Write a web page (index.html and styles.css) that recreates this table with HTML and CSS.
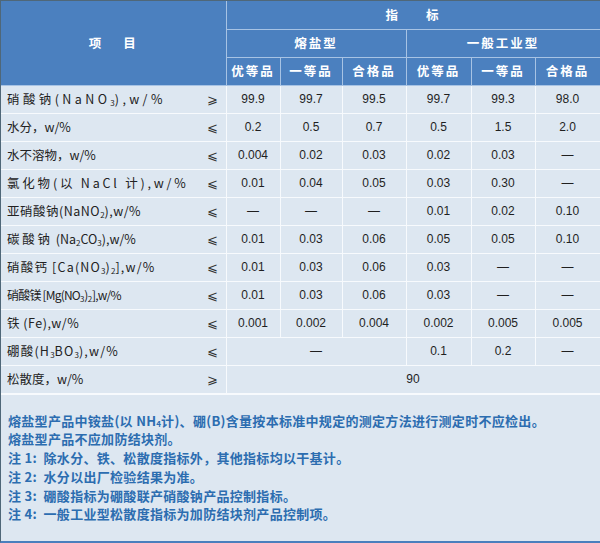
FILE: index.html
```html
<!DOCTYPE html>
<html lang="zh-CN">
<head>
<meta charset="utf-8">
<title>工业硝酸钠指标</title>
<link rel="stylesheet" href="styles.css">
</head>
<body>
<div class="sheet">
  <table class="spec">
    <colgroup>
      <col class="c-label"><col class="c-sym">
      <col class="c-a"><col class="c-b"><col class="c-c">
      <col class="c-d"><col class="c-e"><col class="c-f">
    </colgroup>
    <thead>
      <tr class="hr1">
        <th colspan="2" rowspan="3" class="item">项<span class="gap"></span>目</th>
        <th colspan="6" class="wide">指<span class="gap2"></span>标</th>
      </tr>
      <tr class="hr2">
        <th colspan="3">熔盐型</th>
        <th colspan="3">一般工业型</th>
      </tr>
      <tr class="hr3">
        <th>优等品</th><th>一等品</th><th>合格品</th>
        <th>优等品</th><th>一等品</th><th>合格品</th>
      </tr>
    </thead>
    <tbody>
      <tr>
        <td class="lbl sp4">硝酸钠(NaNO<sub>3</sub>),w/%</td><td class="sym">⩾</td>
        <td>99.9</td><td>99.7</td><td>99.5</td><td>99.7</td><td>99.3</td><td>98.0</td>
      </tr>
      <tr>
        <td class="lbl">水分，w/%</td><td class="sym">⩽</td>
        <td>0.2</td><td>0.5</td><td>0.7</td><td>0.5</td><td>1.5</td><td>2.0</td>
      </tr>
      <tr>
        <td class="lbl">水不溶物，w/%</td><td class="sym">⩽</td>
        <td>0.004</td><td>0.02</td><td>0.03</td><td>0.02</td><td>0.03</td><td>—</td>
      </tr>
      <tr>
        <td class="lbl sp3">氯化物(以 NaCl 计),w/%</td><td class="sym">⩽</td>
        <td>0.01</td><td>0.04</td><td>0.05</td><td>0.03</td><td>0.30</td><td>—</td>
      </tr>
      <tr>
        <td class="lbl sp1">亚硝酸钠(NaNO<sub>2</sub>),w/%</td><td class="sym">⩽</td>
        <td>—</td><td>—</td><td>—</td><td>0.01</td><td>0.02</td><td>0.10</td>
      </tr>
      <tr>
        <td class="lbl"><span class="sp3">碳酸钠</span> (Na<sub>2</sub>CO<sub>3</sub>),w/%</td><td class="sym">⩽</td>
        <td>0.01</td><td>0.03</td><td>0.06</td><td>0.05</td><td>0.05</td><td>0.10</td>
      </tr>
      <tr>
        <td class="lbl sp2">硝酸钙 [Ca(NO<sub>3</sub>)<sub>2</sub>],w/%</td><td class="sym">⩽</td>
        <td>0.01</td><td>0.03</td><td>0.06</td><td>0.03</td><td>—</td><td>—</td>
      </tr>
      <tr>
        <td class="lbl tight">硝酸镁 [Mg(NO<sub>3</sub>)<sub>2</sub>],w/%</td><td class="sym">⩽</td>
        <td>0.01</td><td>0.03</td><td>0.06</td><td>0.03</td><td>—</td><td>—</td>
      </tr>
      <tr>
        <td class="lbl sp1">铁 (Fe),w/%</td><td class="sym">⩽</td>
        <td>0.001</td><td>0.002</td><td>0.004</td><td>0.002</td><td>0.005</td><td>0.005</td>
      </tr>
      <tr>
        <td class="lbl sp2">硼酸(H<sub>3</sub>BO<sub>3</sub>),w/%</td><td class="sym">⩽</td>
        <td colspan="3">—</td><td>0.1</td><td>0.2</td><td>—</td>
      </tr>
      <tr>
        <td class="lbl">松散度，w/%</td><td class="sym">⩾</td>
        <td colspan="6">90</td>
      </tr>
    </tbody>
  </table>
  <div class="notes">
    <p>熔盐型产品中铵盐(以 NH<sub>4</sub>计)、硼(B)含量按本标准中规定的测定方法进行测定时不应检出。</p>
    <p>熔盐型产品不应加防结块剂。</p>
    <p>注 1:&nbsp; 除水分、铁、松散度指标外，其他指标均以干基计。</p>
    <p>注 2:&nbsp; 水分以出厂检验结果为准。</p>
    <p>注 3:&nbsp; 硼酸指标为硼酸联产硝酸钠产品控制指标。</p>
    <p>注 4:&nbsp; 一般工业型松散度指标为加防结块剂产品控制项。</p>
  </div>
</div>
</body>
</html>
```

FILE: styles.css
```css
html, body {
  margin: 0;
  padding: 0;
  background: #dde7f1;
}

.sheet {
  width: 599px;
  height: 540px;
  border-top: 1px solid #4f6778;
  border-left: 1px solid #4f6778;
  border-bottom: 2px solid #4a7fbd;
  background: #dde7f1;
  overflow: hidden;
}

.spec {
  width: 599px;
  border-collapse: collapse;
  table-layout: fixed;
  font-family: "Liberation Sans", "Noto Sans CJK SC", sans-serif;
  font-size: 12px;
  color: #1f1f1f;
}

.c-label { width: 199px; }
.c-sym { width: 26px; }
.c-a { width: 54px; }
.c-b { width: 62px; }
.c-c { width: 64px; }
.c-d { width: 65px; }
.c-e { width: 64px; }
.c-f { width: 65px; }

.spec th {
  background: #4b80bf;
  color: #ffffff;
  font-family: "Noto Sans CJK SC", sans-serif;
  font-weight: 700;
  font-size: 12.5px;
  letter-spacing: 2px;
  border: 1px solid #a7c3e4;
  padding: 0;
  text-align: center;
  line-height: 1;
}

.spec thead tr:first-child th { border-top: none; }
.spec th.item { border-left: none; }
.spec thead tr th:last-child { border-right-color: #dfeaf6; }

.hr1 { height: 28px; }
.hr2 { height: 28px; }
.hr3 { height: 28px; }

.gap { display: inline-block; width: 20px; }
.gap2 { display: inline-block; width: 26px; }

.spec td {
  height: 27px;
  padding: 0;
  text-align: center;
  border: 1px solid #f7fafd;
  line-height: 1;
}

.spec tbody tr td:first-child { border-left: none; }
.spec tbody tr:last-child td { border-bottom: 2px solid #f7fafd; }

.spec td.lbl {
  text-align: left;
  padding-left: 6px;
  font-family: "Noto Sans CJK SC", sans-serif;
  font-size: 12.5px;
  color: #222;
  border-right: none;
  white-space: nowrap;
}

.spec td.sym {
  border-left: none;
  font-family: "DejaVu Sans", sans-serif;
  font-size: 13px;
  color: #333;
  text-align: center;
}

.sp1 { letter-spacing: 0.5px; }
.sp2 { letter-spacing: 1.2px; }
.sp3 { letter-spacing: 2.8px; }
.sp4 { letter-spacing: 3.4px; }
.tight { letter-spacing: -0.8px; font-size: 12px !important; }

sub {
  font-size: 8px;
  vertical-align: -2px;
  line-height: 0;
  letter-spacing: 0;
}

.notes {
  padding: 17px 0 0 7px;
  font-family: "Noto Sans CJK SC", sans-serif;
  font-size: 13px;
  font-weight: 700;
  color: #2c6db0;
  line-height: 18.8px;
  letter-spacing: 0.3px;
}

.notes p {
  margin: 0;
  white-space: nowrap;
}

.notes sub {
  font-size: 8px;
  vertical-align: -1px;
}
```
